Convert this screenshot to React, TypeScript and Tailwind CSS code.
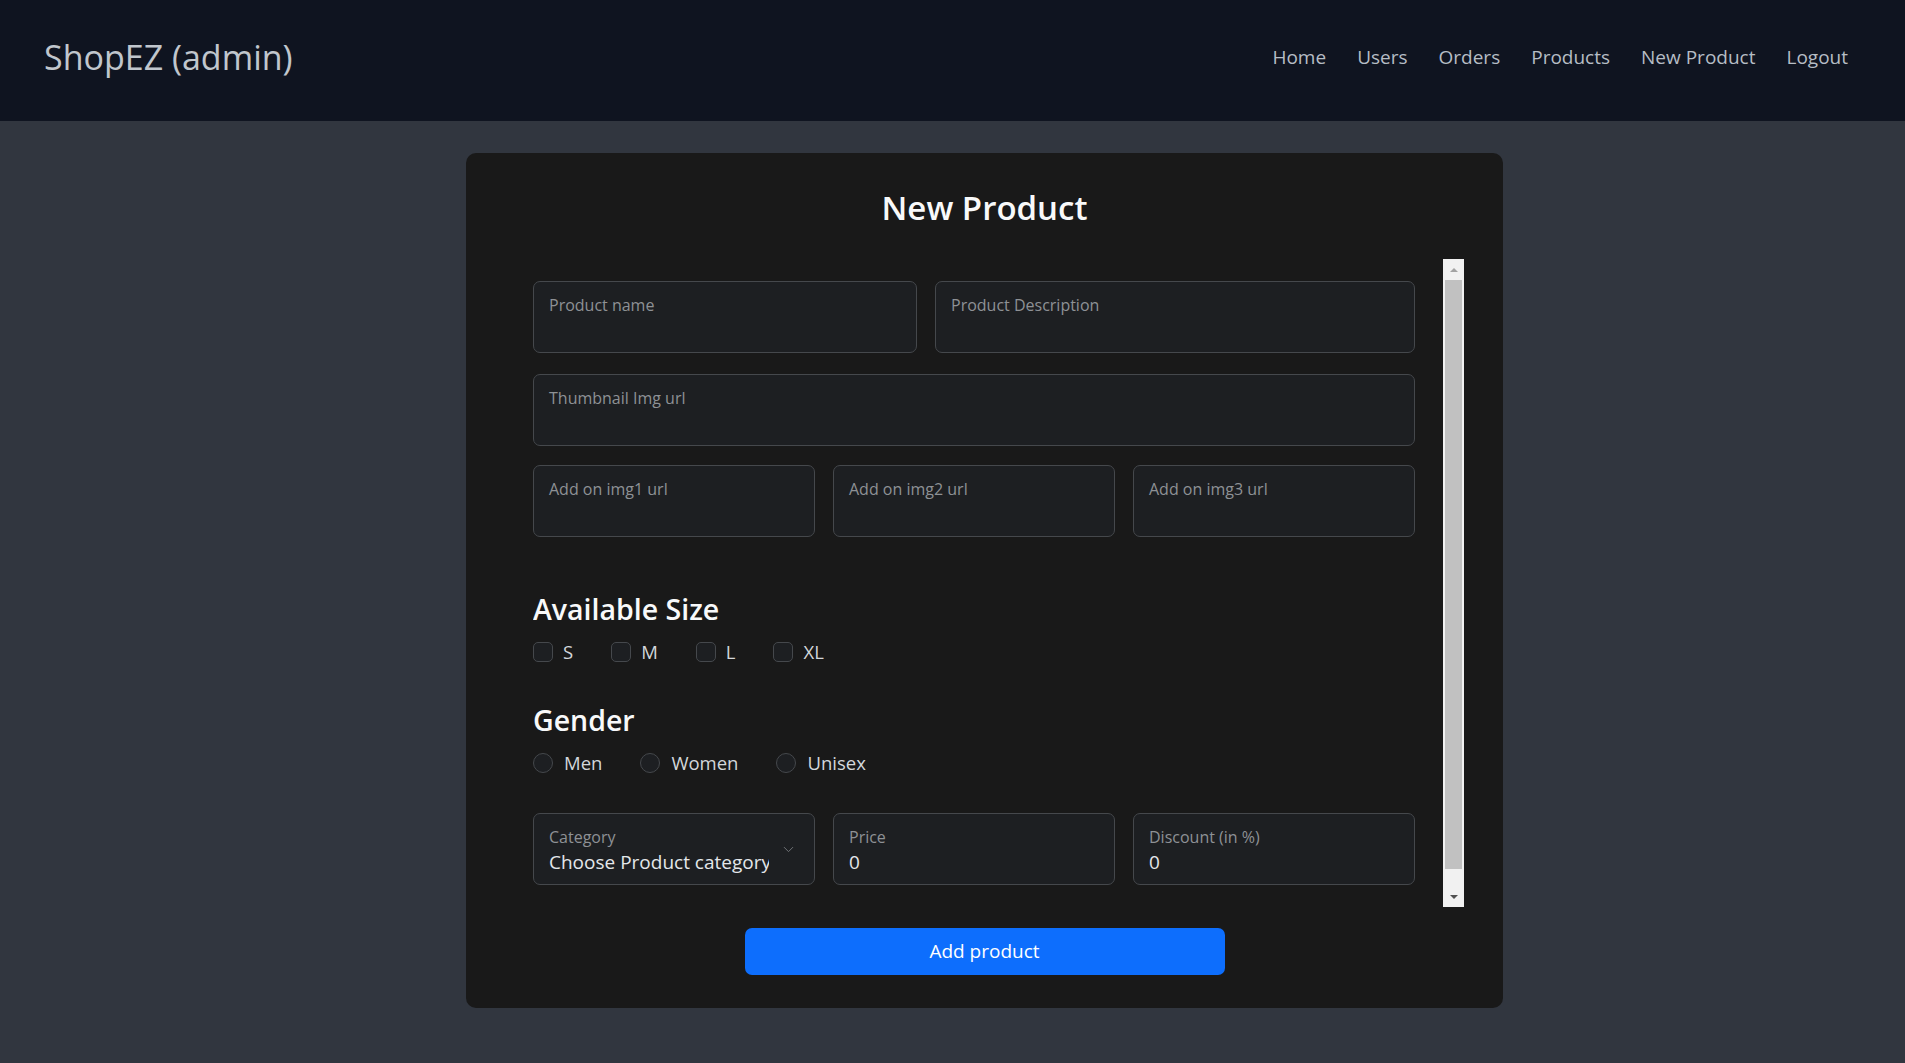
import { ChevronDown } from 'lucide-react'

const navLinks = ['Home', 'Users', 'Orders', 'Products', 'New Product', 'Logout']

function Field({ label, value, className = '' }: { label: string; value?: string; className?: string }) {
  return (
    <div className={`h-[72px] rounded-[7px] border border-[#45484c] bg-[#1d1f22] px-[15px] pt-[13px] ${className}`}>
      <div className="text-[16px] leading-[20px] text-[#8e9195]">{label}</div>
      {value !== undefined && <div className="mt-[3px] text-[19px] leading-[24px] text-[#e4e7ea]">{value}</div>}
    </div>
  )
}

function Box({ round }: { round?: boolean }) {
  return (
    <span
      className={`h-[20px] w-[20px] shrink-0 border border-[#45484c] bg-[#1d1f22] ${round ? 'rounded-full' : 'rounded-[5px]'}`}
    />
  )
}

function FakeScrollbar() {
  return (
    <div className="flex w-[21px] shrink-0 flex-col bg-[#f1f1f1]">
      <div className="flex h-[21px] items-center justify-center">
        <span className="h-0 w-0 border-x-[4px] border-b-[4px] border-x-transparent border-b-[#a3a3a3]" />
      </div>
      <div className="flex-1 px-[2px]">
        <div className="h-[589px] bg-[#c1c1c1]" />
      </div>
      <div className="flex h-[21px] items-center justify-center">
        <span className="h-0 w-0 border-x-[4px] border-t-[4px] border-x-transparent border-t-[#505050]" />
      </div>
    </div>
  )
}

export default function App() {
  return (
    <div className="min-h-screen bg-[#31363f] font-['Open_Sans',sans-serif]">
      <header className="flex h-[121px] items-center justify-between bg-[#0f1420] pb-[6px] pl-[44px] pr-[57px]">
        <h1 className="text-[34px] font-medium text-[#c0c6cd]">ShopEZ (admin)</h1>
        <nav className="flex gap-[31px] text-[19px] text-[#b6bdc5]">
          {navLinks.map((l) => (
            <a key={l} className="cursor-pointer">
              {l}
            </a>
          ))}
        </nav>
      </header>

      <main className="pt-[32px] pb-[54px]">
        <div className="ml-[466px] flex w-[1037px] flex-col items-center rounded-[10px] bg-[#191919] pt-[32px] pb-[33px]">
          <h2 className="text-[33px] font-semibold leading-[46px] text-[#f8f9fa]">New Product</h2>

          {/* form area with scrollbar */}
          <div className="mt-[28px] flex h-[648px] w-full pl-[67px] pr-[39px]">
            <div className="w-[882px] overflow-hidden pt-[22px]">
              <div className="grid grid-cols-[384px_1fr] gap-[18px]">
                <Field label="Product name" />
                <Field label="Product Description" />
              </div>
              <Field label="Thumbnail Img url" className="mt-[21px]" />
              <div className="mt-[19px] grid grid-cols-3 gap-[18px]">
                <Field label="Add on img1 url" />
                <Field label="Add on img2 url" />
                <Field label="Add on img3 url" />
              </div>

              <h3 className="mt-[54px] text-[28.5px] font-semibold leading-[36px] text-[#f8f9fa]">Available Size</h3>
              <div className="mt-[10px] flex h-[30px] items-center gap-[38px] text-[18.5px] text-[#d3d7db]">
                {['S', 'M', 'L', 'XL'].map((s) => (
                  <label key={s} className="flex items-center gap-[10px]">
                    <Box />
                    {s}
                  </label>
                ))}
              </div>

              <h3 className="mt-[35px] text-[28.5px] font-semibold leading-[36px] text-[#f8f9fa]">Gender</h3>
              <div className="mt-[10px] flex h-[30px] items-center gap-[38px] text-[18.5px] text-[#d3d7db]">
                {['Men', 'Women', 'Unisex'].map((s) => (
                  <label key={s} className="flex items-center gap-[11px]">
                    <Box round />
                    {s}
                  </label>
                ))}
              </div>

              <div className="mt-[35px] grid grid-cols-3 gap-[18px]">
                <div className="relative h-[72px] rounded-[7px] border border-[#45484c] bg-[#1d1f22] pl-[15px] pr-[45px] pt-[13px]">
                  <div className="text-[16px] leading-[20px] text-[#8e9195]">Category</div>
                  <div className="mt-[3px] overflow-hidden whitespace-nowrap text-[19px] leading-[24px] text-[#e4e7ea]">
                    Choose Product category
                  </div>
                  <ChevronDown className="absolute right-[17px] top-[27px] h-[17px] w-[17px] text-[#6f7276]" strokeWidth={1.4} />
                </div>
                <Field label="Price" value="0" />
                <Field label="Discount (in %)" value="0" />
              </div>
            </div>
            <div className="ml-[28px] flex">
              <FakeScrollbar />
            </div>
          </div>

          <button className="mt-[21px] h-[47px] w-[480px] rounded-[7px] bg-[#0d6efd] text-[19px] text-white">
            Add product
          </button>
        </div>
      </main>
    </div>
  )
}
